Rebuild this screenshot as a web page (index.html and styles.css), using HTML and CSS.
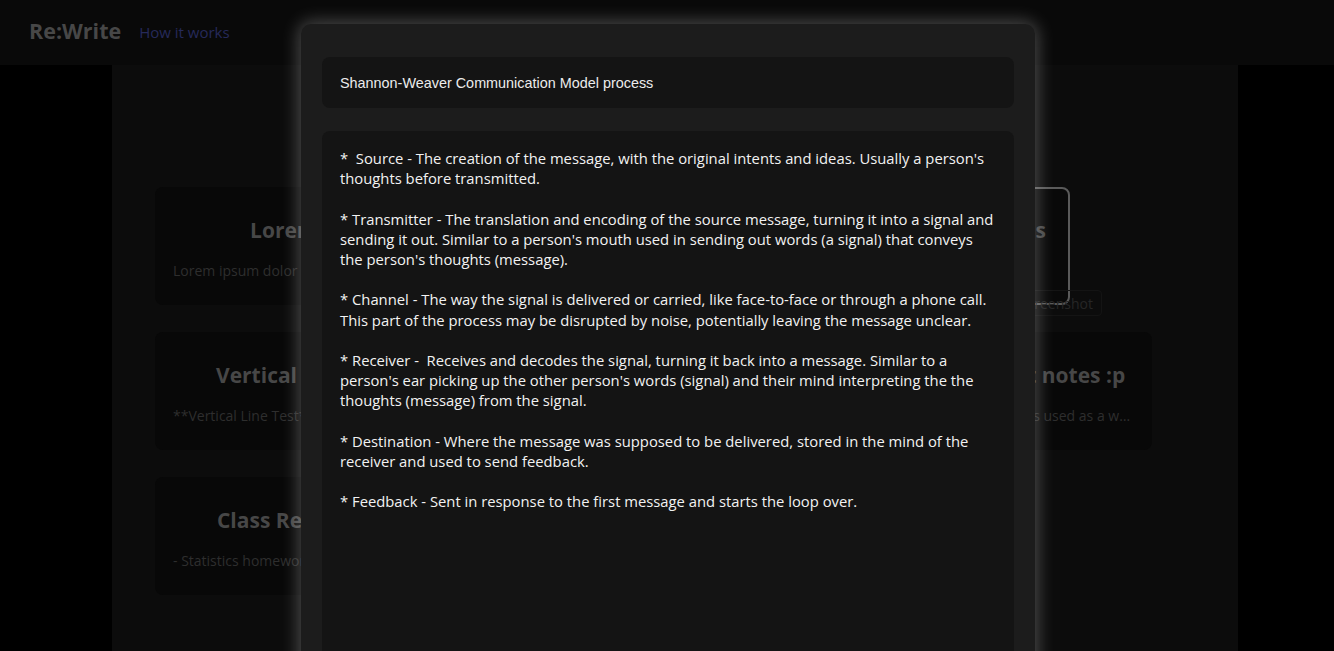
FILE: index.html
```html
<!DOCTYPE html>
<html lang="en">
<head>
<meta charset="utf-8">
<title>Re:Write</title>
<link rel="stylesheet" href="styles.css">
</head>
<body>
<header class="topbar">
  <div class="brand">Re:Write</div>
  <a class="nav-link" href="#">How it works</a>
</header>
<main class="board">
  <section class="grid">
    <article class="card">
      <h2 class="card-title">Lorem Data</h2>
      <p class="card-body">Lorem ipsum dolor sit amet, consectetur adipiscing elit</p>
    </article>
    <article class="card">
      <h2 class="card-title">Shannon-Weaver</h2>
      <p class="card-body">Shannon-Weaver Communication Model process</p>
    </article>
    <div class="new-cell">
      <article class="card card-active">
        <h2 class="card-title">A Writing Process</h2>
        <p class="card-body">Steps</p>
      </article>
      <button class="shot-btn">New Screenshot</button>
    </div>
    <article class="card">
      <h2 class="card-title">Vertical Line Tests</h2>
      <p class="card-body">**Vertical Line Test** - a method used to check functions</p>
    </article>
    <article class="card">
      <h2 class="card-title">Math notes</h2>
      <p class="card-body">Notes about functions</p>
    </article>
    <article class="card">
      <h2 class="card-title">Some important notes :p</h2>
      <p class="card-body">This collection of 20 notes is used as a way to keep track</p>
    </article>
    <article class="card">
      <h2 class="card-title">Class Reminders 2</h2>
      <p class="card-body">- Statistics homework due friday</p>
    </article>
  </section>
</main>

<div class="modal">
  <div class="modal-title">Shannon-Weaver Communication Model process</div>
  <div class="modal-text">*  Source - The creation of the message, with the original intents and ideas. Usually a person's thoughts before transmitted.

* Transmitter - The translation and encoding of the source message, turning it into a signal and sending it out. Similar to a person's mouth used in sending out words (a signal) that conveys the person's thoughts (message).

* Channel - The way the signal is delivered or carried, like face-to-face or through a phone call. This part of the process may be disrupted by noise, potentially leaving the message unclear.

* Receiver -  Receives and decodes the signal, turning it back into a message. Similar to a person's ear picking up the other person's words (signal) and their mind interpreting the the thoughts (message) from the signal.

* Destination - Where the message was supposed to be delivered, stored in the mind of the receiver and used to send feedback.

* Feedback - Sent in response to the first message and starts the loop over.</div>
</div>
</body>
</html>
```

FILE: styles.css
```css
* { box-sizing: border-box; }

html, body {
  margin: 0;
  padding: 0;
  height: 100%;
  overflow: hidden;
}

body {
  background: #000;
  font-family: "Open Sans", "Noto Sans", sans-serif;
}

.topbar {
  height: 65px;
  background: #090909;
  display: flex;
  align-items: center;
  padding: 0 0 4px 29px;
  gap: 18px;
}

.brand {
  font-size: 21.5px;
  font-weight: 700;
  color: #474747;
}

.nav-link {
  font-size: 15px;
  font-weight: 500;
  color: #262a5a;
  text-decoration: none;
  padding-top: 2px;
}

.board {
  margin: 0 96px 0 112px;
  height: calc(100% - 65px);
  background: #0c0c0c;
  padding: 122px 86px 0 43px;
}

.grid {
  display: grid;
  grid-template-columns: repeat(3, 313px);
  column-gap: 29px;
  row-gap: 27px;
}

.card {
  background: #080808;
  border-radius: 8px;
  height: 118px;
  padding: 29px 18px 0;
  margin: 0;
  min-width: 0;
}

.card-title {
  margin: 0;
  font-size: 21px;
  line-height: 29px;
  font-weight: 700;
  color: #474747;
  text-align: center;
  white-space: nowrap;
}

.card-body {
  margin: 16px 0 0;
  font-size: 14px;
  line-height: 20px;
  color: #2e2e2e;
  white-space: nowrap;
  overflow: hidden;
  text-overflow: ellipsis;
}

.new-cell {
  position: relative;
}

.card-active {
  width: 231px;
  border: 2px solid #5a5a5a;
  background: #090909;
  padding-top: 27px;
}

.shot-btn {
  position: absolute;
  left: 139px;
  top: 103px;
  height: 26px;
  padding: 0 8px;
  background: transparent;
  border: 1px solid #141414;
  border-radius: 4px;
  font-family: "Open Sans", sans-serif;
  font-size: 14px;
  color: #262626;
}

.modal {
  position: fixed;
  left: 301px;
  top: 24px;
  width: 734px;
  height: 700px;
  background: #1c1c1c;
  border-radius: 10px;
  box-shadow: 0 0 18px 2px rgba(255, 255, 255, 0.28);
  padding: 33px 21px 0;
  display: flex;
  flex-direction: column;
  gap: 23px;
}

.modal-title {
  height: 51px;
  background: #141414;
  border-radius: 8px;
  padding: 1px 18px 0;
  display: flex;
  align-items: center;
  font-family: "Liberation Sans", Arial, sans-serif;
  font-size: 14.4px;
  color: #ececec;
}

.modal-text {
  flex: 1;
  background: #141414;
  border-radius: 8px;
  padding: 17px 18px;
  font-family: "Open Sans", sans-serif;
  font-size: 14.8px;
  line-height: 20.2px;
  color: #f2f2f2;
  white-space: pre-wrap;
}
```
